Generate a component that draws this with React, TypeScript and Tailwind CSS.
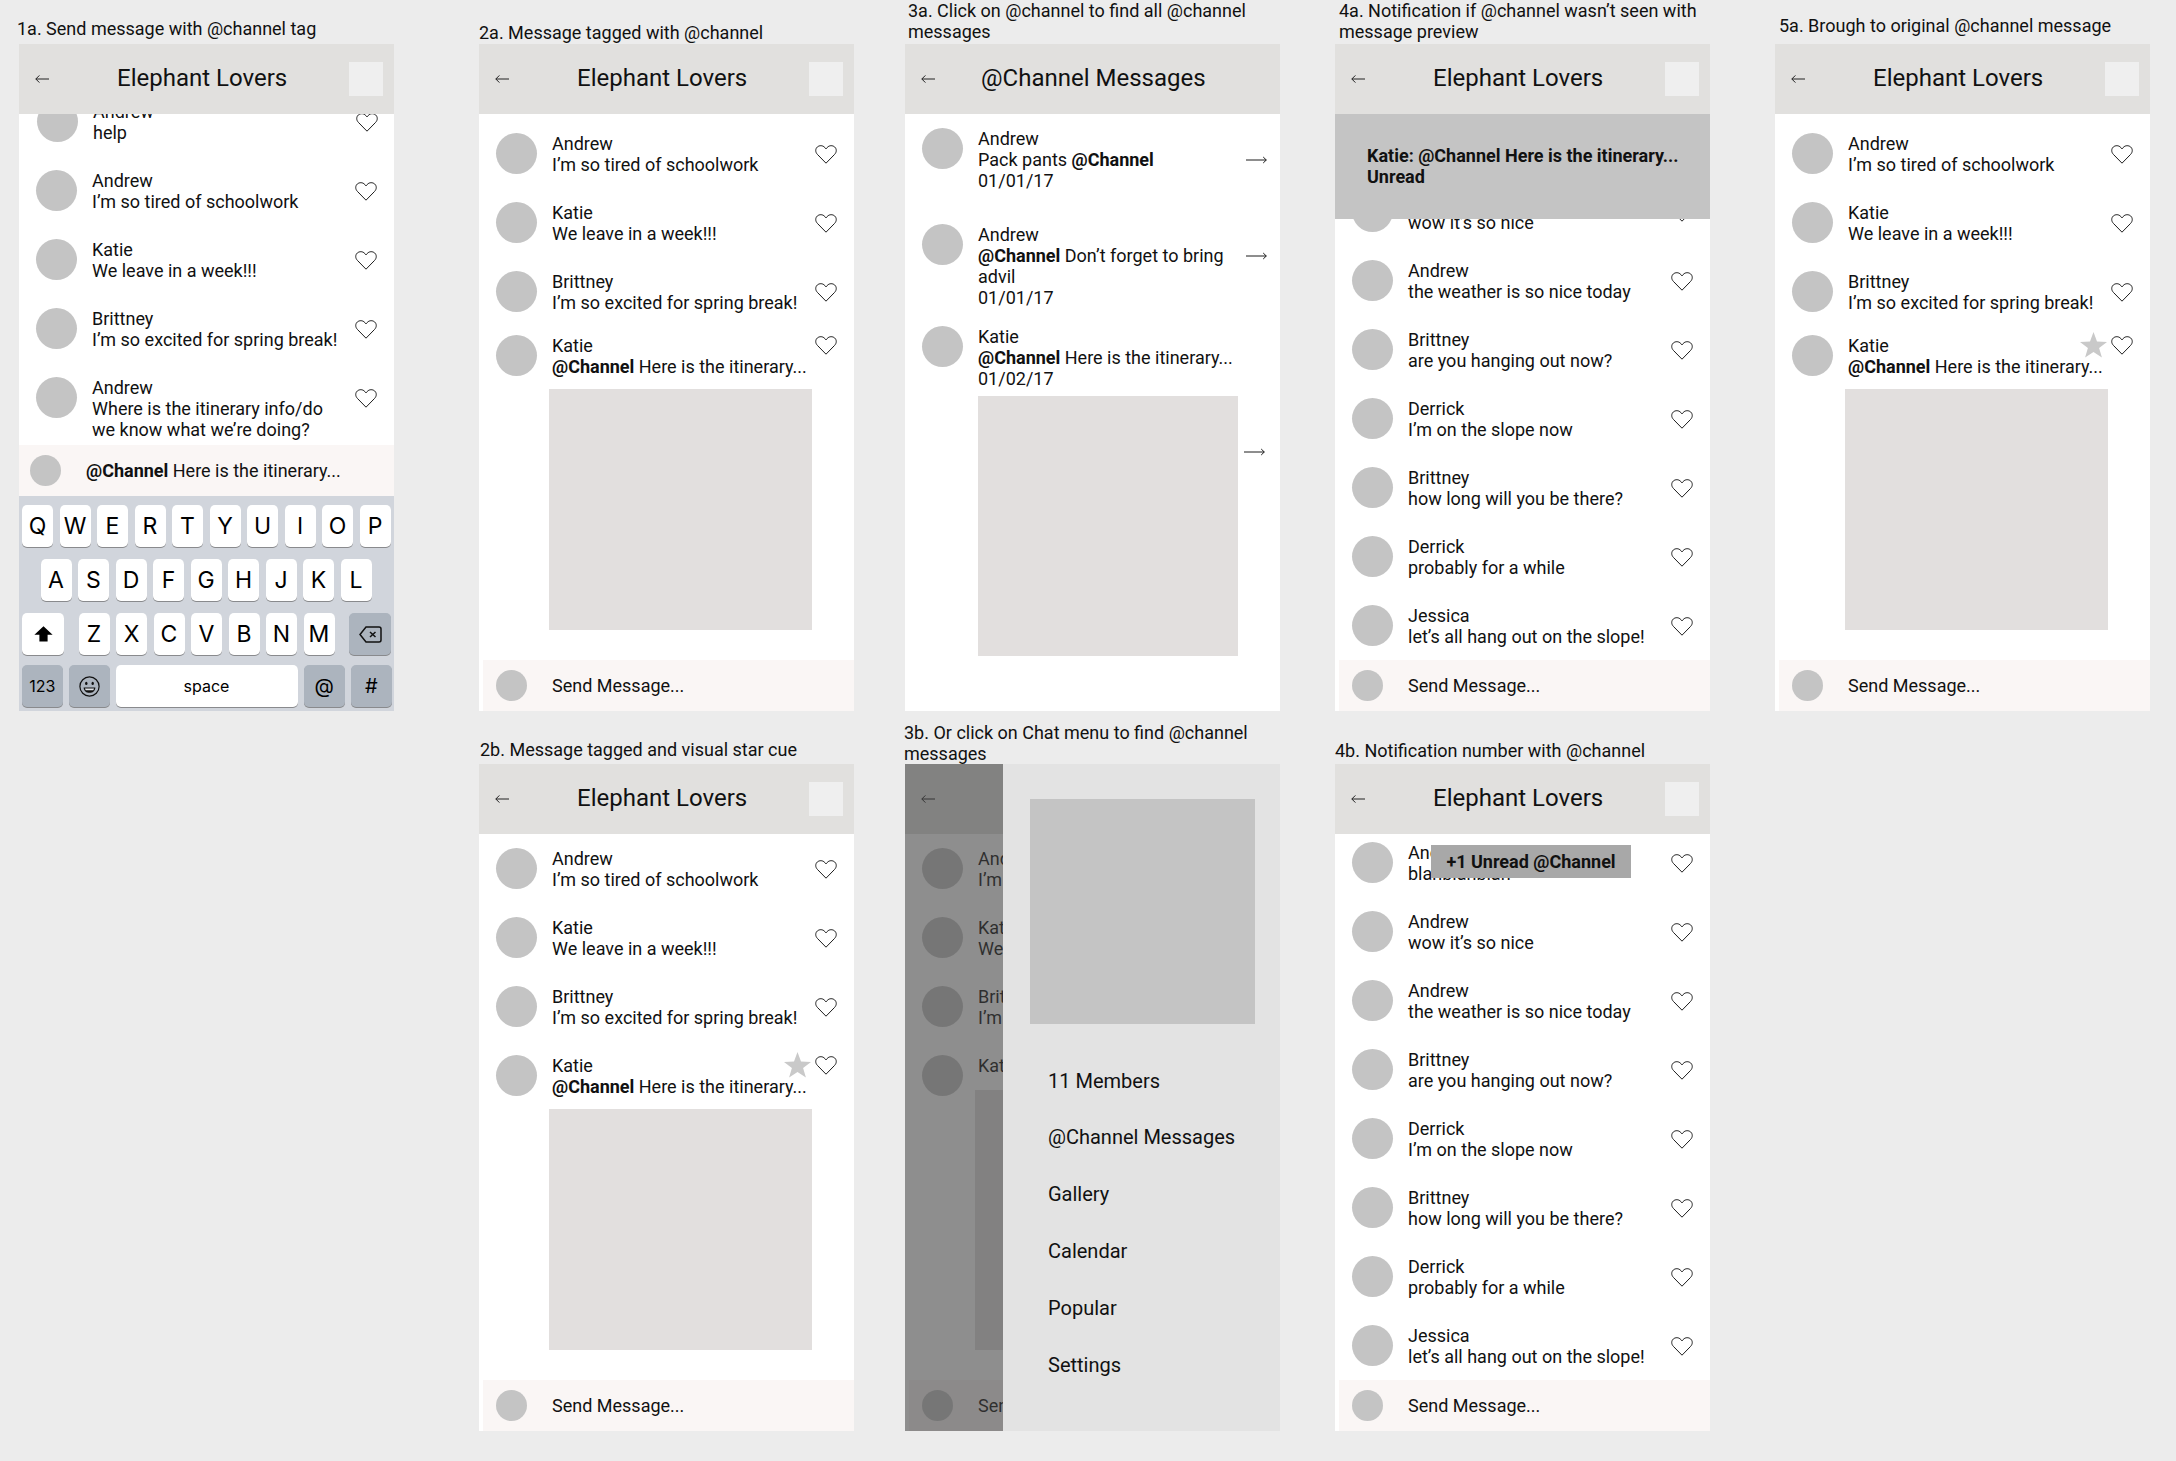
import React from 'react';

const Heart = ({ className = '' }: { className?: string }) => (
  <svg viewBox="0 0 22 19" className={`w-[22px] h-[19px] shrink-0 ${className}`} fill="none">
    <path
      d="M11 18.2 L2.4 9.4 C0.2 7.1 0.2 3.9 2.3 2 C4.5 0.1 7.9 0.3 9.8 2.5 L11 3.9 L12.2 2.5 C14.1 0.3 17.5 0.1 19.7 2 C21.8 3.9 21.8 7.1 19.6 9.4 Z"
      stroke="#1c1c1c"
      strokeWidth="1"
      strokeLinejoin="round"
    />
  </svg>
);

const Star = () => (
  <svg viewBox="0 0 27 26" className="absolute left-[305px] -top-[3px] w-[27px] h-[26px]">
    <polygon points="13.5,0 17,9.6 27,9.9 19.1,16 21.9,25.6 13.5,20 5.1,25.6 7.9,16 0,9.9 10,9.6" fill="#c9c9c9" />
  </svg>
);

const BackArrow = () => (
  <svg viewBox="0 0 14 10" className="w-[14px] h-[10px] ml-[16px] shrink-0" fill="none">
    <path d="M14 5 H0.8 M4.4 1.4 L0.8 5 L4.4 8.6" stroke="#222" strokeWidth="1" />
  </svg>
);

const RightArrow = ({ className = '' }: { className?: string }) => (
  <svg viewBox="0 0 21 8" className={`absolute w-[21px] h-[8px] ${className}`} fill="none">
    <path d="M0 4 H20.3 M17.2 1 L20.3 4 L17.2 7" stroke="#1c1c1c" strokeWidth="1" />
  </svg>
);

const Avatar = () => <div className="w-[41px] h-[41px] rounded-full bg-[#c4c4c4] shrink-0" />;

const Tag = () => <b className="font-bold">@Channel</b>;

const Header = ({ title = 'Elephant Lovers', box = true }: { title?: string; box?: boolean }) => (
  <div className="h-[70px] shrink-0 bg-[#e1e0de] flex items-center">
    <BackArrow />
    <div className={`text-[24px] leading-[28px] -mt-[2px] whitespace-nowrap ${box ? 'ml-[68px]' : 'ml-[46px]'}`}>{title}</div>
    {box && <div className="ml-auto mr-[11px] w-[34px] h-[34px] bg-[#efefef]" />}
  </div>
);

const ChatRow = ({
  name,
  children,
  className = '',
  tagged = false,
  star = false,
}: {
  name: string;
  children?: React.ReactNode;
  className?: string;
  tagged?: boolean;
  star?: boolean;
}) => (
  <div className={`relative flex items-start pl-[17px] ${className}`}>
    <Avatar />
    <div className="ml-[15px] whitespace-nowrap">
      <div>{name}</div>
      {children && <div>{children}</div>}
    </div>
    {star && <Star />}
    <Heart className={`absolute left-[336px] ${tagged ? 'top-[1px]' : 'top-[11.5px]'}`} />
  </div>
);

const SendBar = () => (
  <div className="ml-[4px] h-[51px] shrink-0 bg-[#faf6f5] flex items-center pl-[13px]">
    <div className="w-[31px] h-[31px] rounded-full bg-[#c4c4c4]" />
    <div className="ml-[25px]">Send Message...</div>
  </div>
);

const Screen = ({ children }: { children: React.ReactNode }) => (
  <div className="relative w-[375px] h-[667px] bg-white flex flex-col overflow-hidden text-[18px] leading-[21px] text-[#111]">
    {children}
  </div>
);

const Board = ({
  label,
  className,
  labelClass,
  children,
}: {
  label: string;
  className: string;
  labelClass: string;
  children: React.ReactNode;
}) => (
  <div className={`absolute w-[375px] ${className}`}>
    <p className={`text-[18px] leading-[21px] text-[#111] ${labelClass}`}>{label}</p>
    <Screen>{children}</Screen>
  </div>
);

const Key = ({ children, className = 'w-[31px] bg-white' }: { children: React.ReactNode; className?: string }) => (
  <div className={`h-[42px] rounded-[5px] shadow-[0_1px_0_#898a8d] flex items-center justify-center shrink-0 ${className}`}>
    {children}
  </div>
);

const DARK_KEY = 'bg-[#acb4be]';

const Keyboard = () => (
  <div className="h-[215px] shrink-0 bg-[#d1d5dc] pt-[9px] font-[Inter,sans-serif] text-[23px] leading-none text-black">
    <div className="flex gap-[6.5px] pl-[3px]">
      {'QWERTYUIOP'.split('').map((k) => (
        <Key key={k}>{k}</Key>
      ))}
    </div>
    <div className="flex gap-[6.5px] pl-[21.5px] mt-[12px]">
      {'ASDFGHJKL'.split('').map((k) => (
        <Key key={k}>{k}</Key>
      ))}
    </div>
    <div className="flex justify-between px-[3px] mt-[12px]">
      <Key className="w-[42px] bg-white">
        <svg viewBox="0 0 19 16" className="w-[19px] h-[16px]">
          <path d="M9.5 0.3 L18.6 8.8 H13.6 V15.6 H5.4 V8.8 H0.4 Z" fill="#000" />
        </svg>
      </Key>
      <div className="flex gap-[6.5px]">
        {'ZXCVBNM'.split('').map((k) => (
          <Key key={k}>{k}</Key>
        ))}
      </div>
      <Key className={`w-[42px] ${DARK_KEY}`}>
        <svg viewBox="0 0 23 17" className="w-[23px] h-[17px]" fill="none" stroke="#111" strokeWidth="1.5">
          <path d="M7 1 H20 Q22 1 22 3 V14 Q22 16 20 16 H7 L1 8.5 Z" />
          <path d="M11 6 L16.5 11 M16.5 6 L11 11" />
        </svg>
      </Key>
    </div>
    <div className="flex px-[3px] mt-[10px] text-[16px]">
      <Key className={`w-[40.5px] ${DARK_KEY}`}>123</Key>
      <Key className={`w-[40.5px] ml-[6.5px] ${DARK_KEY}`}>
        <svg viewBox="0 0 21 21" className="w-[21px] h-[21px]" fill="none" stroke="#111" strokeWidth="1.2">
          <circle cx="10.5" cy="10.5" r="9.6" />
          <ellipse cx="7.3" cy="7.4" rx="1.2" ry="1.7" fill="#111" stroke="none" />
          <ellipse cx="13.7" cy="7.4" rx="1.2" ry="1.7" fill="#111" stroke="none" />
          <path d="M4.6 11.4 H16.4 C16.1 15 13.7 16.8 10.5 16.8 C7.3 16.8 4.9 15 4.6 11.4 Z" fill="#111" stroke="none" />
          <path d="M6 12.4 H15 Q14.8 13.6 14.2 14.2 H6.8 Q6.2 13.6 6 12.4 Z" fill="#dfe2e6" stroke="none" />
        </svg>
      </Key>
      <Key className="w-[182px] ml-[6px] bg-white">space</Key>
      <Key className={`w-[40.5px] ml-[6.5px] text-[20px] ${DARK_KEY}`}>@</Key>
      <Key className={`w-[40.5px] ml-[6.5px] text-[20px] ${DARK_KEY}`}>#</Key>
    </div>
  </div>
);

const tiredRows = (
  <>
    <ChatRow name="Andrew">I’m so tired of schoolwork</ChatRow>
    <ChatRow name="Katie">We leave in a week!!!</ChatRow>
    <ChatRow name="Brittney">I’m so excited for spring break!</ChatRow>
  </>
);

const ItineraryMsg = () => (
  <>
    <Tag /> Here is the itinerary...
  </>
);

// 2a and 5a share everything but the star
const TaggedChat = ({ star = false }: { star?: boolean }) => (
  <>
    <Header />
    <div className="flex-1 min-h-0 overflow-hidden">
      <div className="flex flex-col gap-[27px] mt-[19px]">{tiredRows}</div>
      <ChatRow name="Katie" tagged star={star} className="mt-[22px]">
        <ItineraryMsg />
      </ChatRow>
      <div className="ml-[70px] mt-[12px] w-[263px] h-[241px] bg-[#e2dfde]" />
    </div>
    <SendBar />
  </>
);

const laterRows = (
  <>
    <ChatRow name="Andrew">wow it’s so nice</ChatRow>
    <ChatRow name="Andrew">the weather is so nice today</ChatRow>
    <ChatRow name="Brittney">are you hanging out now?</ChatRow>
    <ChatRow name="Derrick">I’m on the slope now</ChatRow>
    <ChatRow name="Brittney">how long will you be there?</ChatRow>
    <ChatRow name="Derrick">probably for a while</ChatRow>
    <ChatRow name="Jessica">let’s all hang out on the slope!</ChatRow>
  </>
);

const menuItems = ['@Channel Messages', 'Gallery', 'Calendar', 'Popular', 'Settings'];

export default function App() {
  return (
    <div className="relative w-[2176px] h-[1461px] overflow-hidden bg-[#ececec] font-[Roboto,sans-serif]">
      <Board label="1a. Send message with @channel tag" className="left-[19px] top-[18px]" labelClass="-ml-[2px] mb-[5px]">
        <Header />
        <div className="flex-1 min-h-0 overflow-hidden">
          <div className="flex flex-col gap-[27px] -mt-[13px]">
            <ChatRow name="Andrew" className="ml-px">help</ChatRow>
            {tiredRows}
            <ChatRow name="Andrew">
              Where is the itinerary info/do
              <br />
              we know what we’re doing?
            </ChatRow>
          </div>
        </div>
        <div className="h-[51px] shrink-0 bg-[#faf6f5] flex items-center pl-[11px]">
          <div className="w-[31px] h-[31px] rounded-full bg-[#c4c4c4]" />
          <div className="ml-[25px]">
            <ItineraryMsg />
          </div>
        </div>
        <Keyboard />
      </Board>

      <Board label="2a. Message tagged with @channel" className="left-[479px] top-[22px]" labelClass="mb-[1px]">
        <TaggedChat />
      </Board>

      <Board label="2b. Message tagged and visual star cue" className="left-[479px] top-[739px]" labelClass="ml-[1px] mb-[4px]">
        <Header />
        <div className="flex-1 min-h-0 overflow-hidden">
          <div className="flex flex-col gap-[27px] mt-[14px]">
            {tiredRows}
            <ChatRow name="Katie" tagged star>
              <ItineraryMsg />
            </ChatRow>
          </div>
          <div className="ml-[70px] mt-[12px] w-[263px] h-[241px] bg-[#e2dfde]" />
        </div>
        <SendBar />
      </Board>

      <Board label="3a. Click on @channel to find all @channel messages" className="left-[905px] top-0" labelClass="ml-[3px] mb-[2px]">
        <Header title="@Channel Messages" box={false} />
        <div className="flex-1 min-h-0 pt-[14px]">
          <div className="relative flex items-start pl-[17px]">
            <Avatar />
            <div className="ml-[15px]">
              <div>Andrew</div>
              <div>
                Pack pants <Tag />
              </div>
              <div>01/01/17</div>
            </div>
            <RightArrow className="left-[341px] top-[28px]" />
          </div>
          <div className="relative flex items-start pl-[17px] mt-[33px]">
            <Avatar />
            <div className="ml-[15px]">
              <div>Andrew</div>
              <div>
                <Tag /> Don’t forget to bring
                <br />
                advil
              </div>
              <div>01/01/17</div>
            </div>
            <RightArrow className="left-[341px] top-[28px]" />
          </div>
          <div className="relative mt-[18px]">
            <div className="flex items-start pl-[17px]">
              <Avatar />
              <div className="ml-[15px]">
                <div>Katie</div>
                <div>
                  <ItineraryMsg />
                </div>
                <div>01/02/17</div>
              </div>
            </div>
            <div className="ml-[73px] mt-[7px] w-[260px] h-[260px] bg-[#e2dfde]" />
            <RightArrow className="left-[339px] top-[122px]" />
          </div>
        </div>
      </Board>

      <Board label="3b. Or click on Chat menu to find @channel messages" className="left-[905px] top-[722px]" labelClass="-ml-[1px]">
        <Header />
        <div className="flex-1 min-h-0 overflow-hidden">
          <div className="flex flex-col gap-[27px] mt-[14px]">
            {tiredRows}
            <ChatRow name="Katie" tagged />
          </div>
          <div className="relative ml-[70px] -mt-[6px] w-[263px] h-[260px] bg-[#e2dfde]" />
        </div>
        <SendBar />
        <div className="absolute inset-0 bg-[#424242]/60" />
        <div className="absolute top-0 bottom-0 right-0 w-[277px] bg-[#e3e3e3] pt-[35px] pl-[27px] text-[20px] leading-[57px]">
          <div className="w-[225px] h-[225px] bg-[#c4c4c4]" />
          <div className="mt-[29px] ml-[18px]">
            <div className="leading-[56px]">11 Members</div>
            {menuItems.map((m) => (
              <div key={m}>{m}</div>
            ))}
          </div>
        </div>
      </Board>

      <Board label="4a. Notification if @channel wasn’t seen with message preview" className="left-[1335px] top-0" labelClass="ml-[4px] mb-[2px]">
        <Header />
        <div className="h-[105px] shrink-0 bg-[#c4c4c4] pl-[32px] pt-[31px] font-bold relative">
          <div>Katie: @Channel Here is the itinerary...</div>
          <div>Unread</div>
        </div>
        <div className="flex-1 min-h-0 overflow-hidden">
          <div className="flex flex-col gap-[27px] -mt-[28px]">{laterRows}</div>
        </div>
        <SendBar />
      </Board>

      <Board label="4b. Notification number with @channel" className="left-[1335px] top-[740px]" labelClass="mb-[3px]">
        <Header />
        <div className="relative flex-1 min-h-0 overflow-hidden">
          <div className="flex flex-col gap-[27px] mt-[8px]">
            <ChatRow name="Andrew">blahblahblah</ChatRow>
            {laterRows}
          </div>
          <div className="absolute left-[96px] top-[11px] w-[200px] h-[33px] bg-[#a8a8a8] font-bold flex items-center justify-center">
            +1 Unread @Channel
          </div>
        </div>
        <SendBar />
      </Board>

      <Board label="5a. Brough to original @channel message" className="left-[1775px] top-[15px]" labelClass="ml-[4px] mb-[8px]">
        <TaggedChat star />
      </Board>
    </div>
  );
}
